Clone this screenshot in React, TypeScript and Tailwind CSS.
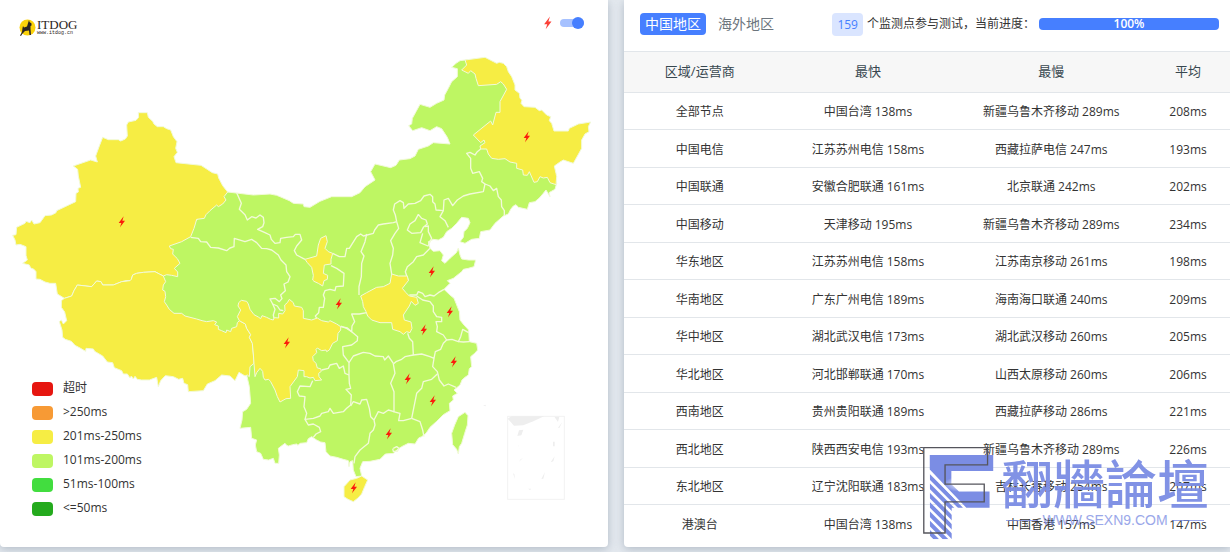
import { useState } from 'react';

interface RegionRow {
  region: string;
  fastest: string;
  slowest: string;
  average: string;
}

const ROWS: RegionRow[] = [
  { region: '全部节点', fastest: '中国台湾 138ms', slowest: '新疆乌鲁木齐移动 289ms', average: '208ms' },
  { region: '中国电信', fastest: '江苏苏州电信 158ms', slowest: '西藏拉萨电信 247ms', average: '193ms' },
  { region: '中国联通', fastest: '安徽合肥联通 161ms', slowest: '北京联通 242ms', average: '202ms' },
  { region: '中国移动', fastest: '天津移动 195ms', slowest: '新疆乌鲁木齐移动 289ms', average: '234ms' },
  { region: '华东地区', fastest: '江苏苏州电信 158ms', slowest: '江苏南京移动 261ms', average: '198ms' },
  { region: '华南地区', fastest: '广东广州电信 189ms', slowest: '海南海口联通 240ms', average: '209ms' },
  { region: '华中地区', fastest: '湖北武汉电信 173ms', slowest: '湖北武汉移动 260ms', average: '205ms' },
  { region: '华北地区', fastest: '河北邯郸联通 170ms', slowest: '山西太原移动 260ms', average: '206ms' },
  { region: '西南地区', fastest: '贵州贵阳联通 189ms', slowest: '西藏拉萨移动 286ms', average: '221ms' },
  { region: '西北地区', fastest: '陕西西安电信 193ms', slowest: '新疆乌鲁木齐移动 289ms', average: '226ms' },
  { region: '东北地区', fastest: '辽宁沈阳联通 183ms', slowest: '吉林长春移动 254ms', average: '207ms' },
  { region: '港澳台', fastest: '中国台湾 138ms', slowest: '中国香港 157ms', average: '147ms' },
];

const LEGEND = [
  { label: '超时', color: 'bg-[#e61610]' },
  { label: '>250ms', color: 'bg-[#f79a35]' },
  { label: '201ms-250ms', color: 'bg-[#f6ed44]' },
  { label: '101ms-200ms', color: 'bg-[#bef663]' },
  { label: '51ms-100ms', color: 'bg-[#42dd3f]' },
  { label: '<=50ms', color: 'bg-[#24aa1d]' },
];

// Map coordinates are in thirds of a pixel
const MAINLAND =
  '683,576 650,600 560,690 490,740 480,840 470,950 640,1030 720,1110 735,1108 740,1125 748,1160 752,1210 740,1228 728,1235 726,1260 720,1285 752,1282 755,1315 770,1320 766,1335 770,1355 782,1360 790,1378 806,1380 820,1375 825,1390 836,1390 838,1365 835,1345 855,1330 860,1336 865,1338 878,1334 890,1332 894,1336 900,1330 920,1328 925,1316 935,1310 950,1320 962,1326 975,1328 978,1355 990,1368 1010,1372 1030,1378 1045,1382 1047,1400 1050,1385 1058,1382 1060,1410 1068,1430 1085,1428 1080,1405 1088,1385 1110,1384 1140,1378 1156,1362 1180,1360 1190,1350 1205,1340 1225,1330 1245,1332 1256,1314 1265,1310 1278,1300 1290,1282 1310,1264 1330,1244 1350,1232 1348,1210 1360,1200 1358,1188 1372,1180 1362,1170 1380,1155 1386,1140 1395,1132 1405,1125 1408,1106 1415,1100 1412,1070 1424,1060 1433,1050 1430,1030 1408,1025 1406,990 1392,975 1380,960 1378,935 1368,910 1362,895 1350,885 1332,868 1350,850 1342,842 1360,835 1385,815 1390,808 1405,805 1422,800 1427,780 1405,780 1385,777 1380,765 1375,744 1370,757 1350,775 1335,790 1325,782 1330,765 1320,752 1300,754 1290,745 1285,725 1300,718 1315,720 1330,712 1340,695 1355,685 1370,670 1385,652 1405,655 1410,668 1402,685 1392,695 1390,712 1380,725 1395,730 1415,718 1438,715 1442,695 1470,690 1485,670 1510,648 1525,642 1532,628 1540,618 1548,614 1555,622 1582,628 1588,608 1605,605 1618,594 1630,580 1638,570 1650,590 1647,578 1665,568 1670,550 1600,400 1490,190 1455,175 1395,180 1380,182 1368,190 1355,202 1372,206 1372,230 1355,245 1345,265 1334,285 1332,300 1310,310 1290,322 1260,313 1248,335 1237,355 1235,372 1226,377 1238,392 1265,383 1290,392 1310,380 1325,386 1342,412 1350,432 1300,428 1285,438 1255,448 1245,468 1230,476 1198,480 1188,496 1172,503 1125,492 1112,515 1125,540 1095,560 1080,578 1055,590 995,590 960,604 930,622 912,620 910,612 880,610 868,602 840,590 830,586 810,582 760,585';

const XINJIANG =
  '415,338 442,338 445,352 458,364 462,372 472,380 490,380 500,386 512,390 520,410 531,425 527,445 532,457 522,470 528,488 603,496 637,518 653,522 656,534 668,557 683,576 672,590 678,600 668,612 655,620 650,615 630,632 618,644 613,655 590,658 582,685 572,710 545,725 508,738 512,746 520,748 518,762 532,776 540,790 523,805 533,816 533,830 515,826 500,824 490,828 478,822 465,815 430,817 410,820 398,825 394,838 390,842 378,842 365,845 340,855 308,855 303,845 290,843 275,860 232,855 222,872 215,888 193,895 172,882 167,850 150,850 135,846 120,838 108,837 108,815 102,808 92,804 88,795 68,790 82,780 78,766 78,740 60,733 48,735 45,720 38,706 48,704 50,682 75,670 78,664 90,668 95,660 102,672 120,668 135,647 155,645 168,638 170,632 227,605 228,580 235,576 234,565 242,562 235,528 233,508 220,498 272,480 292,486 287,468 298,438 308,412 325,419 355,419 362,423 376,417 382,408 380,375 385,366 408,361 416,352';

const TIBET =
  '193,895 184,902 184,922 194,936 200,962 190,972 184,960 178,965 186,990 188,1012 196,1018 214,1024 225,1036 240,1044 257,1054 258,1045 280,1047 284,1054 308,1068 322,1086 338,1088 343,1103 365,1112 370,1122 382,1122 390,1134 394,1128 400,1137 405,1129 412,1138 425,1140 448,1140 470,1132 475,1160 482,1142 496,1127 520,1130 536,1138 548,1135 552,1150 563,1154 565,1175 610,1172 622,1152 645,1142 665,1125 690,1128 705,1142 717,1117 735,1128 742,1125 748,1130 750,1100 762,1090 760,1062 757,1030 748,1012 752,1004 740,985 736,972 718,962 712,968 710,980 695,985 692,995 680,990 678,998 665,992 655,988 655,978 644,974 650,966 640,962 620,965 606,962 590,957 555,948 545,940 522,940 508,928 500,915 493,905 497,890 495,874 488,870 490,855 497,845 490,828 478,822 465,815 430,817 410,820 398,825 394,838 390,842 365,845 340,855 308,855 303,845 290,843 275,860 232,855 222,872 215,888';

const SICHUAN =
  '718,962 712,950 722,930 714,918 716,908 724,901 740,904 745,912 750,928 762,944 775,951 782,956 786,947 800,952 812,958 820,960 823,953 836,954 836,940 848,942 855,932 854,915 862,908 868,898 880,908 883,918 905,922 910,932 910,955 935,960 952,954 965,962 985,966 990,962 1010,972 1022,980 1022,990 1014,1000 1012,1022 998,1030 988,1050 980,1055 978,1050 965,1052 952,1044 948,1048 950,1058 938,1070 940,1082 948,1090 952,1104 962,1106 964,1114 956,1120 957,1130 965,1140 945,1142 940,1132 930,1134 920,1130 912,1130 912,1112 895,1110 892,1130 870,1160 872,1195 858,1196 840,1206 832,1190 825,1170 812,1145 806,1138 795,1140 790,1132 788,1114 780,1105 770,1118 765,1130 762,1090 760,1062 757,1030 748,1012 752,1004 740,985 736,972';

const NINGXIA =
  '915,778 950,768 955,735 962,715 978,707 982,725 975,745 985,755 998,760 993,778 993,792 973,795 970,820 983,826 982,838 972,842 968,858 955,850 942,844 938,840 940,826 935,802 922,788';

const HENAN =
  '1082,888 1100,878 1130,862 1150,860 1170,850 1175,822 1195,828 1222,828 1225,842 1207,865 1218,878 1228,888 1250,892 1255,910 1245,916 1234,904 1228,918 1210,945 1213,960 1233,966 1236,985 1230,998 1220,995 1210,1003 1200,995 1178,988 1175,968 1140,968 1115,960 1103,948 1098,935 1090,920 1088,905';

const HEILONGJIANG =
  '1395,180 1455,172 1490,190 1498,187 1510,190 1520,200 1525,215 1535,230 1545,255 1545,270 1558,280 1560,295 1566,300 1563,310 1572,320 1605,322 1618,332 1625,330 1640,345 1652,350 1648,362 1655,370 1662,393 1705,393 1708,385 1735,372 1772,366 1765,380 1767,395 1755,402 1745,420 1745,445 1734,465 1720,490 1690,480 1680,486 1663,498 1668,520 1670,530 1668,554 1650,548 1642,532 1630,534 1620,530 1612,545 1602,547 1588,515 1582,526 1570,525 1568,510 1550,505 1550,490 1530,486 1515,476 1495,478 1475,475 1465,462 1460,447 1442,447 1440,438 1455,428 1452,420 1442,428 1420,405 1472,363 1478,375 1488,337 1500,337 1500,305 1520,268 1510,252 1502,245 1490,253 1435,257 1428,235 1425,222 1412,212 1405,220 1385,210 1400,195';

const HAINAN = '1085,1428 1103,1440 1094,1460 1085,1482 1074,1494 1060,1505 1044,1498 1032,1490 1032,1460 1050,1440 1070,1435';

const TAIWAN = '1395,1237 1404,1247 1402,1275 1394,1300 1385,1330 1378,1340 1375,1362 1370,1348 1358,1334 1355,1300 1364,1275 1375,1250';

const YELLOW_PROVINCES = [XINJIANG, TIBET, SICHUAN, NINGXIA, HENAN, HEILONGJIANG, HAINAN];

const BORDERS = [
  // Gansu / Inner Mongolia
  '710,578 716,592 724,610 718,628 735,644 742,660 755,650 768,654 780,645 790,652 792,668 788,680 773,688 795,698 810,705 814,718 825,730 840,728 842,715 860,712 880,710 886,703 900,703 905,720 890,738 883,752 890,765 915,778',
  // Gansu / Qinghai
  '572,712 595,715 602,725 620,726 632,742 655,744 680,752 690,744 702,740 703,715 735,725 755,718 770,728 785,745 800,746 815,750 835,765 843,780 858,795 860,815 870,830 864,846 852,852 856,872 842,885 846,896 838,905 825,895 810,897 818,912 832,918 840,930 850,932',
  '818,912 825,928 820,945 822,955',
  // Shaanxi
  '993,797 1010,805 1032,820 1030,858 1008,860 1005,872 990,868 975,872 970,885 974,895 970,922 958,922 956,938 946,948 952,958',
  '998,760 1018,770 1035,770 1040,745 1048,745 1070,710 1082,702 1090,708 1120,700 1124,690 1135,675 1150,672 1180,668 1190,665',
  '1100,702 1095,725 1083,755 1092,768 1085,790 1084,830 1077,860 1077,885',
  '1022,978 1040,985 1055,995 1056,978 1064,965 1055,942 1078,942 1100,938',
  // Hebei
  '1190,665 1186,645 1180,630 1184,612 1200,602 1210,608 1212,625 1225,612 1245,610 1262,602 1272,588 1290,583 1298,590 1298,605 1305,612 1308,630 1330,632 1320,650 1335,662 1345,682',
  '1190,665 1196,685 1185,700 1172,722 1180,745 1178,765 1170,790 1175,822',
  '1225,842 1216,815 1222,800 1240,785 1250,770 1270,765 1290,745',
  '1255,643 1265,655 1278,660 1282,672 1270,682 1262,698 1235,700 1222,690 1230,672 1245,662 1255,643',
  '1275,680 1285,678 1285,695 1295,715 1284,738 1260,728 1268,700',
  // Liaoning and Jilin
  '1330,632 1332,600 1345,595 1358,617 1372,600 1390,588 1410,582 1450,575 1455,552 1470,558 1480,572 1490,565 1495,590 1504,600 1505,620 1513,632 1513,648',
  '1455,552 1445,545 1448,535 1438,515 1418,520 1412,505 1412,475 1400,460 1410,457 1425,465 1432,455 1442,447',
  // Shandong, Jiangsu, Anhui
  '1228,885 1250,885 1255,875 1268,880 1275,890 1290,885 1302,888 1315,878 1332,868',
  '1250,888 1268,900 1290,905 1300,918 1300,935 1310,950 1325,952 1325,965 1308,965 1312,980 1310,995 1330,1005 1340,1020',
  '1340,1020 1356,1018 1375,1025 1382,1010 1388,988 1406,998',
  '1375,1025 1390,1026 1408,1025',
  '1223,1000 1228,1015 1238,1025 1240,1065 1265,1062 1290,1070 1302,1075 1306,1055 1322,1048 1330,1030 1340,1020',
  // Zhejiang, Jiangxi, Fujian
  '1302,1075 1298,1100 1312,1115 1318,1140 1332,1158 1345,1152 1368,1162',
  '1312,1122 1295,1138 1270,1145 1265,1165 1250,1180 1242,1220 1235,1255',
  '1235,1255 1210,1262 1196,1262 1200,1240 1180,1235',
  '1235,1255 1260,1265 1268,1290 1272,1310',
  '1240,1065 1215,1070 1205,1078 1188,1085 1180,1092 1185,1120 1172,1150 1182,1175 1182,1235',
  // Hubei and Hunan
  '1047,1088 1060,1068 1090,1057 1110,1060 1125,1068 1150,1070 1154,1080 1165,1068 1180,1090',
  '1182,1235 1165,1230 1150,1240 1135,1235 1122,1260',
  '1122,1260 1112,1250 1108,1225 1100,1198 1085,1200 1080,1212 1060,1205 1052,1218',
  '1122,1260 1125,1275 1120,1290 1110,1300 1105,1330 1080,1350 1065,1370 1062,1390',
  // Chongqing, Guizhou, Guangxi, Yunnan
  '1022,980 1042,984 1055,995 1073,1010 1072,1022 1055,1035 1028,1040 1030,1065 1047,1088 1047,1125 1048,1150 1052,1165 1038,1168 1054,1185 1052,1215',
  '965,1110 985,1105 990,1095 1010,1090 1018,1105 1030,1098 1035,1120 1047,1125',
  '938,1142 930,1160 900,1158 892,1175 898,1188 915,1190 912,1220 920,1240 915,1258 940,1255 960,1248 965,1240 985,1235 990,1225 1000,1240 1030,1235 1040,1225 1052,1215',
  '915,1258 925,1275 940,1272 958,1282 962,1295 948,1302 940,1312',
  // Hong Kong and Macau
  '1180,1345 1190,1340 1197,1345 1192,1354 1180,1354 1178,1346',
];

const ALERTS = [
  [122, 222], [527, 137], [432, 272], [339, 304], [450, 312], [424, 330],
  [287, 343], [454, 362], [408, 379], [433, 401], [389, 434], [354, 488],
];

const BOLT = '5,-17 -10,3 -2,3 -6,16 9,-4 1,-4';

const TABLE_HEAD = 'h-[42px] border-y border-[#e2e6ea] text-[13px] font-normal text-[#37474f]';
const TABLE_CELL = 'border-b border-[#e2e6ea] pt-[2px]';

function Logo() {
  return (
    <a href="#" className="flex items-center gap-px text-[#2b2422]">
      <svg viewBox="0 0 34 34" className="h-[17px] w-[17px]" aria-hidden="true">
        <circle cx="17" cy="17" r="16" fill="#fbd20a" />
        <path
          d="M20 2 L21 6 L25 9 L25 13 L23 14 L23 20 L24 32 L21 32 L20 23 L12 24 L7 29 L4 34 L2 33 L6 26 L7 18 L8 14 L10 17 L16 15 Z"
          fill="#2b2422"
        />
      </svg>
      <span className="flex flex-col pt-px">
        <span className="font-['Liberation_Serif',serif] text-[13px] leading-[12px]">ITDOG</span>
        <span className="font-['Liberation_Mono',monospace] text-[5px] leading-[5px]">www.itdog.cn</span>
      </span>
    </a>
  );
}

function ChinaMap({ showAlerts }: { showAlerts: boolean }) {
  return (
    <svg viewBox="0 120 1824 1521" className="block w-full" role="img" aria-label="中国地图">
      <g stroke="#f2fad9" strokeLinejoin="round" strokeWidth="3">
        <polygon points={MAINLAND} fill="#bef663" />
        <polygon points={TAIWAN} fill="#bef663" />
        {BORDERS.map(points => (
          <polyline key={points} points={points} fill="none" strokeWidth="4" />
        ))}
        {YELLOW_PROVINCES.map(points => (
          <polygon key={points} points={points} fill="#f6ed44" />
        ))}
      </g>
      <g fill="#eeeeee">
        <rect x="1523" y="1249" width="170" height="249" fill="none" stroke="#f2f2f2" strokeWidth="3" />
        <path d="M1523 1256 L1534 1249 L1632 1249 L1600 1264 L1570 1276 L1542 1277 Z" />
        <path d="M1557 1291 L1570 1289 L1564 1306 L1552 1308 Z" />
        <path d="M1663 1250 L1678 1250 L1674 1266 Z M1687 1266 L1674 1283 L1678 1284 Z" />
        <path d="M1659 1325 h5 v14 h-5 Z M1664 1369 L1652 1387 L1660 1384 Z M1635 1416 L1624 1437 L1630 1436 Z" />
        <path d="M1553 1332 L1560 1351 L1555 1336 Z M1569 1374 L1556 1386 L1562 1378 Z M1539 1420 L1545 1438 L1543 1422 Z M1584 1466 L1594 1466 L1590 1470 Z" />
        <path d="M1449 1217 l8 -3 v5 Z" />
      </g>
      {showAlerts && (
        <g fill="#fb1c0c">
          {ALERTS.map(([x, y]) => (
            <polygon key={`${x}-${y}`} points={BOLT} transform={`translate(${x * 3} ${y * 3})`} />
          ))}
        </g>
      )}
    </svg>
  );
}

function MapPanel() {
  const [showAlerts, setShowAlerts] = useState(true);

  return (
    <section className="relative rounded-b bg-white shadow-[0_2px_10px_rgba(80,100,120,0.35)]">
      <div className="flex h-10 items-center justify-between pr-6 pl-[19px] pt-[14px]">
        <Logo />
        <label className="flex items-center gap-2 pb-2">
          <svg viewBox="-10 -18 20 36" className="h-[14px] w-2" aria-hidden="true">
            <polygon points={BOLT} fill="#fb4038" />
          </svg>
          <input
            type="checkbox"
            aria-label="显示异常节点"
            checked={showAlerts}
            onChange={e => setShowAlerts(e.target.checked)}
            className="relative h-2 w-6 appearance-none rounded-full bg-[#a6c1ff] before:absolute before:-top-[2px] before:left-0 before:h-3 before:w-3 before:rounded-full before:bg-[#467fff] checked:before:left-3"
          />
        </label>
      </div>
      <ChinaMap showAlerts={showAlerts} />
      <ul className="absolute bottom-[26px] left-8 text-xs text-[#333]">
        {LEGEND.map(item => (
          <li key={item.label} className="flex h-6 items-center gap-[10px]">
            <span className={`h-[14px] w-[21px] rounded ${item.color}`} />
            <span className="pb-[2px]">{item.label}</span>
          </li>
        ))}
      </ul>
    </section>
  );
}

function Watermark() {
  return (
    <div className="pointer-events-none absolute right-[21px] bottom-[7px] flex gap-[7px] text-[#7b8de4]">
      <svg viewBox="70 48 213 280" className="h-[93px] w-[71px]" aria-hidden="true">
        <defs>
          <radialGradient id="glow">
            <stop offset="0" stopColor="#fff" />
            <stop offset="1" stopColor="#fff" stopOpacity="0" />
          </radialGradient>
          <clipPath id="stem">
            <path d="M90 126 L190 231 L156 231 V326 H90 Z" />
          </clipPath>
        </defs>
        <path d="M90 72 H281 V120 H155 V160 L178 182 H270 V231 H200 L90 116 Z" fill="#7b8de4" />
        <path
          d="M70 118 L210 258 M70 146 L210 286 M70 174 L210 314 M70 202 L210 342 M70 230 L210 370 M70 258 L210 398 M70 286 L210 426"
          stroke="#7b8de4"
          strokeWidth="12"
          clipPath="url(#stem)"
        />
        <ellipse cx="190" cy="160" rx="60" ry="24" fill="url(#glow)" />
        <path
          d="M72 50 H264 V102 H136 V160 H254 V213 H136 V307 H72 Z"
          fill="none"
          stroke="#55555c"
          strokeWidth="4"
        />
      </svg>
      <div className="flex flex-col pt-2 opacity-95">
        <span className="font-['Noto_Sans_CJK_TC',sans-serif] text-[52px] leading-[54px] font-medium">翻牆論壇</span>
        <span className="flex items-center justify-center gap-1 font-['Liberation_Sans',sans-serif] text-[14px] leading-[22px] opacity-80">
          <span className="h-px w-8 bg-current" />
          WWW.SEXN9.COM
          <span className="h-px w-8 bg-current" />
        </span>
      </div>
    </div>
  );
}

function ResultPanel() {
  return (
    <section className="relative rounded-bl bg-white shadow-[0_2px_10px_rgba(80,100,120,0.35)]">
      <div className="flex h-[51px] items-center justify-between pr-[11px] pb-[3px] pl-4">
        <div className="flex items-center gap-[7px] text-sm leading-[22px]">
          <button type="button" className="rounded bg-[#467fff] px-[5px] text-white">中国地区</button>
          <button type="button" className="px-[5px] text-[#6c757d]">海外地区</button>
        </div>
        <div className="flex items-center text-xs text-[#333]">
          <span className="mr-1 rounded bg-[#dae5ff] px-[5px] leading-[23px] text-[#467fff]">159</span>
          <span>个监测点参与测试，当前进度：</span>
          <div
            role="progressbar"
            aria-valuenow={100}
            aria-label="当前进度"
            className="ml-1 h-3 w-[180px] rounded bg-[#467fff] text-center leading-3 font-semibold text-white"
          >
            100%
          </div>
        </div>
      </div>
      <table className="w-full table-fixed border-separate border-spacing-0 text-center text-xs text-[#333]">
        <colgroup>
          <col className="w-[25%]" />
          <col className="w-[30.5%]" />
          <col className="w-[30%]" />
          <col />
        </colgroup>
        <thead className="bg-[#f7f7f7]">
          <tr>
            <th className={TABLE_HEAD}>区域/运营商</th>
            <th className={TABLE_HEAD}>最快</th>
            <th className={TABLE_HEAD}>最慢</th>
            <th className={`${TABLE_HEAD} pl-1`}>平均</th>
          </tr>
        </thead>
        <tbody>
          {ROWS.map(row => (
            <tr key={row.region} className="odd:h-[37px] even:h-[38px] last:*:border-b-0">
              <td className={TABLE_CELL}>{row.region}</td>
              <td className={TABLE_CELL}>{row.fastest}</td>
              <td className={TABLE_CELL}>{row.slowest}</td>
              <td className={`${TABLE_CELL} pl-1`}>{row.average}</td>
            </tr>
          ))}
        </tbody>
      </table>
      <Watermark />
    </section>
  );
}

export default function App() {
  return (
    <main className="min-h-screen overflow-hidden bg-[#e4e9ef] font-['Open_Sans','Noto_Sans_CJK_SC',sans-serif]">
      <div className="grid grid-cols-[608fr_606fr] gap-4">
        <MapPanel />
        <ResultPanel />
      </div>
    </main>
  );
}
